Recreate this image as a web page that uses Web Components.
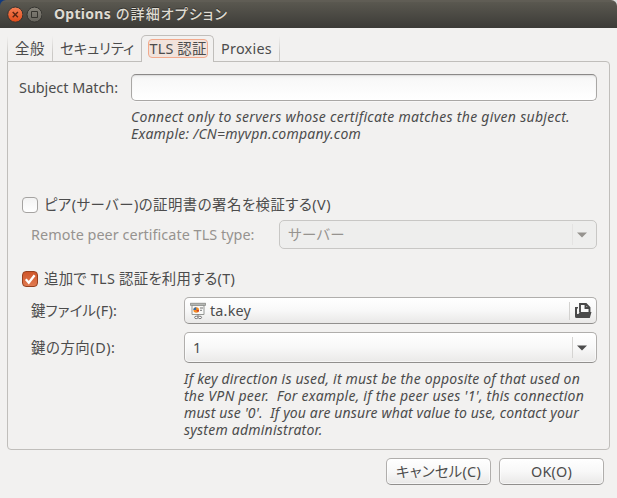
<!DOCTYPE html>
<html lang="ja">
<head>
<meta charset="utf-8">
<title>Options の詳細オプション</title>
<style>
html,body{margin:0;height:100%;overflow:hidden}
body{font:14.4px/17px "Noto Sans","Noto Sans CJK JP",sans-serif;font-feature-settings:"palt";color:#4c4c4c;background:#f2f1f0}
</style>
</head>
<body>
<options-dialog></options-dialog>
<script>
const define = (name, html, setup) => customElements.define(name, class extends HTMLElement {
  connectedCallback() {
    if (this.shadowRoot) return;
    const t = document.createElement('template');
    t.innerHTML = html;
    this.attachShadow({mode: 'open'}).append(t.content.cloneNode(true));
    if (setup) setup(this);
  }
});

/* One line of text, tracked so that it fills the width given in "w". */
define('fit-text', `<style>:host{display:block;white-space:pre;flex:none;line-height:17px}span{display:inline-block}</style><span><slot></slot></span>`, el => {
  const w = parseFloat(el.getAttribute('w'));
  el.style.width = w + 'px';
  const s = el.shadowRoot.querySelector('span');
  const n = [...el.textContent].length;
  s.style.letterSpacing = (w - s.getBoundingClientRect().width) / n + 'px';
});

define('title-bar', `<style>
:host{display:flex;align-items:center;height:28px;box-sizing:border-box;padding-left:7px;background:linear-gradient(#5b5850 0,#65625a 1px,#5a5850 2px,#3c3b37 100%);border-radius:6px 6px 0 0;color:#dfdbd2;font-weight:700;font-size:14px}
svg{display:block;margin-right:3px}fit-text{margin:0 0 1px 9px;text-shadow:0 -1px #33322e}.jp{margin-left:5px;font-weight:500}
</style>
<svg width="16" height="18" viewBox="0 0 16 18"><defs><linearGradient id="r" x2="0" y2="1"><stop stop-color="#f58055"/><stop offset="1" stop-color="#df4a19"/></linearGradient></defs><circle cx="8.3" cy="9.6" r="7.6" fill="url(#r)" stroke="#34332f"/><path d="M5.7 7l5.2 5.2M10.9 7l-5.2 5.2" stroke="#572412" stroke-width="1.4"/></svg>
<svg width="16" height="18" viewBox="0 0 16 18"><defs><linearGradient id="g" x2="0" y2="1"><stop stop-color="#858279"/><stop offset="1" stop-color="#65635c"/></linearGradient></defs><circle cx="8.5" cy="9.6" r="7.5" fill="url(#g)" stroke="#34332f"/><path d="M5.5 6.5h6v6h-6z" fill="none" stroke="#35342f"/></svg>
<fit-text w="57">Options</fit-text><fit-text class="jp" w="112">の詳細オプション</fit-text>`);

define('tab-item', `<style>
:host{display:flex;box-sizing:border-box;height:34px;padding:12px 0 0 7px;background:linear-gradient(transparent,#cbc9c6 70%) right 8px/1px 25px no-repeat}
:host([selected]){height:27px;padding:3px 0 0 5.5px;border:1px solid #c0bebb;border-bottom:0;border-radius:5px 5px 0 0;background:#f2f1f0;align-self:flex-end}
.focus{display:flex;align-items:flex-start}
:host([selected]) .focus{box-sizing:border-box;height:19px;width:60px;padding-left:1px;border:1px solid #f2aa8d;border-radius:4px;background:#f1e3dc}
</style><div class="focus"><slot></slot></div>`);

define('tab-strip', `<style>:host{display:flex;height:34px;padding-left:8px;margin-bottom:-1px;position:relative;z-index:1}
:host{background:linear-gradient(transparent,#cbc9c6 70%) 7px 8px/1px 25px no-repeat}
.a{width:45px}.b{width:88px;background-image:none}.c{width:73px}.d{width:66px}</style>
<tab-item class="a"><fit-text w="30">全般</fit-text></tab-item>
<tab-item class="b"><fit-text w="74">セキュリティ</fit-text></tab-item>
<tab-item class="c" selected><fit-text w="57">TLS 認証</fit-text></tab-item>
<tab-item class="d"><fit-text w="51">Proxies</fit-text></tab-item>`);

define('text-entry', `<style>:host{display:block;box-sizing:border-box;height:27px;border:1px solid #a9a7a5;border-top-color:#8b8988;border-radius:5px;background:linear-gradient(#f0f0f0,#f8f8f8 4px,#fff);box-shadow:inset 0 1px 1px #ddd,0 1px #f8f7f7}</style>`);

define('push-button', `<style>
:host{display:flex;box-sizing:border-box;align-items:center;justify-content:center;border:1px solid #b0aeac;border-bottom-color:#918f8d;border-radius:5px;background:linear-gradient(#fff,#f8f8f8 50%,#e9e8e7);box-shadow:inset 0 0 0 1px #ffffff90}
</style><slot></slot>`);

define('combo-box', `<style>
:host{display:flex;box-sizing:border-box;align-items:center;height:var(--h,31px);padding-left:8px;border:1px solid #b0aeac;border-bottom-color:#918f8d;border-radius:5px;background:linear-gradient(#fff,#f8f8f8 50%,#eae9e8);box-shadow:inset 0 0 0 1px #ffffff90}
:host([disabled]){color:#96938f;background:#eeeeed;border-color:#c8c7c5;box-shadow:none}
.end{margin-left:auto;width:24px;height:21px;display:flex;align-items:center;padding-left:4px;box-sizing:border-box;border-left:1px solid #d5d4d2}
:host([disabled]) .end{border-color:#e4e3e2}
</style><slot></slot><div class="end"><svg width="10" height="6" viewBox="0 0 10 6"><path d="M0 .5h10L5 5.5z" fill="currentColor"/></svg></div>`);

define('file-button', `<style>
:host{display:flex;box-sizing:border-box;align-items:center;height:27px;padding-left:5px;border:1px solid #b0aeac;border-bottom-color:#918f8d;border-radius:5px;background:linear-gradient(#fff,#f8f8f8 50%,#e9e8e7)}
slot{display:block;margin-left:4px}.end{margin-left:auto;width:27px;height:18px;border-left:1px solid #d3d2d0;padding:1px 0 0 5px;box-sizing:border-box}svg{display:block;flex:none}
</style>
<svg width="16" height="18" viewBox="0 0 16 18"><path d="M2 3h12v9.5H2z" fill="#f8f8f7" stroke="#969895"/><path d="M.3 1.3h15.4v2H.3z" fill="#bfc1be" stroke="#777975" stroke-width=".7"/><circle cx="6.2" cy="8" r="2.8" fill="#f28c24"/><path d="M6.2 8V5.2A2.8 2.8 0 0 0 3.4 8z" fill="#366ca5"/><path d="M6.2 8L8 10.2A2.8 2.8 0 0 0 9 8z" fill="#d13d20"/><path d="M10 6h3M10 8.3h2" stroke="#777"/><path d="M8 12.5v2" stroke="#666"/><ellipse cx="6.3" cy="15.4" rx="1.7" ry="1.2" fill="#fff" stroke="#777"/><ellipse cx="9.9" cy="15.4" rx="1.7" ry="1.2" fill="#fff" stroke="#777"/></svg>
<slot></slot><div class="end"><svg width="17" height="16" viewBox="0 0 17 16"><path d="M0 4h3v1.5H2V11h1.5L4.6 9H16.5L14.8 15H1.5Q0 15 0 13.5z" fill="#4a4a4a"/><path d="M5 9V1h6L14.5 4.7V9M10.5 1v4h4" fill="none" stroke="#4a4a4a" stroke-width="1.9"/></svg></div>`);

define('check-box', `<style>
:host{display:flex;align-items:center;height:17px}
i{box-sizing:border-box;width:16px;height:16px;margin-right:6px;border:1px solid #a5a3a1;border-radius:4px;background:linear-gradient(#f3f3f3,#fff);flex:none}
svg{display:none}:host([checked]) i{background:linear-gradient(#cf5529,#e17a50);border-color:#96401f}:host([checked]) svg{display:block}
</style><i><svg width="14" height="14" viewBox="0 0 14 14"><path d="M2.8 7.2l3 3.5 5.8-7.5" fill="none" stroke="#fff" stroke-width="2.3"/></svg></i><slot></slot>`);

define('form-row', `<style>:host{display:grid;align-items:center;grid-template-columns:var(--label) 1fr}</style><slot name="label"></slot><slot></slot>`);

define('help-text', `<style>:host{display:block;font-style:italic;font-size:14px}</style><slot></slot>`);

define('tls-panel', `<style>
:host{display:block;box-sizing:border-box;margin:0 7px;height:389px;padding:12px 12px 0 11px;border:1px solid #c0bebb;border-radius:0 4px 4px 4px}
.subject{--label:112px}.h1{margin:7px 0 0 112px}.verify{margin:54px 0 0 3px}.type{--label:248px;--h:29px;margin:7px 0 0 12px;color:#96938f}
.tls{margin:21px 0 0 3px}.file,.dir{--label:153px;margin:10px 0 0 12px}.dir{margin-top:8px}.h2{margin:7px 0 0 165px}
</style>
<form-row class="subject"><fit-text slot="label" w="99">Subject Match:</fit-text><text-entry></text-entry></form-row>
<help-text class="h1"><fit-text w="439">Connect only to servers whose certificate matches the given subject.</fit-text><fit-text w="230">Example: /CN=myvpn.company.com</fit-text></help-text>
<check-box class="verify"><fit-text w="287">ピア(サーバー)の証明書の署名を検証する(V)</fit-text></check-box>
<form-row class="type"><fit-text slot="label" w="223.5">Remote peer certificate TLS type:</fit-text><combo-box disabled><fit-text w="57">サーバー</fit-text></combo-box></form-row>
<check-box class="tls" checked><fit-text w="191">追加で TLS 認証を利用する(T)</fit-text></check-box>
<form-row class="file"><fit-text slot="label" w="86">鍵ファイル(F):</fit-text><file-button><fit-text w="41">ta.key</fit-text></file-button></form-row>
<form-row class="dir"><fit-text slot="label" w="84.5">鍵の方向(D):</fit-text><combo-box><fit-text w="8">1</fit-text></combo-box></form-row>
<help-text class="h2"><fit-text w="396">If key direction is used, it must be the opposite of that used on</fit-text><fit-text w="400">the VPN peer.  For example, if the peer uses '1', this connection</fit-text><fit-text w="395">must use '0'.  If you are unsure what value to use, contact your</fit-text><fit-text w="138.5">system administrator.</fit-text></help-text>`);

define('options-dialog', `<style>
:host{display:block;height:498px;background:linear-gradient(90deg,#123a7c 50%,#ddd 50%) 0 0/100% 8px no-repeat,#f2f1f0}
footer{display:flex;justify-content:flex-end;gap:8px;padding:8px 13px 0 0}push-button{width:105px;height:27px}
</style>
<title-bar></title-bar><tab-strip></tab-strip><tls-panel></tls-panel>
<footer><push-button><fit-text w="85">キャンセル(C)</fit-text></push-button><push-button><fit-text w="41">OK(O)</fit-text></push-button></footer>`);
</script>
</body>
</html>
